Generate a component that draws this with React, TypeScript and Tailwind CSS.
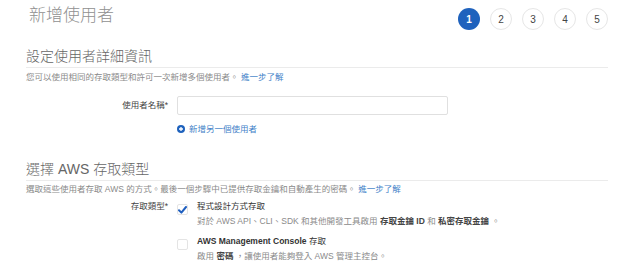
const font = { fontFamily: '"Liberation Sans", "Noto Sans CJK TC", sans-serif' };

function Steps({ current }: { current: number }) {
  return (
    <div className="flex gap-[10px]">
      {[1, 2, 3, 4, 5].map((n) =>
        n === current ? (
          <div key={n} className="w-[22px] h-[22px] rounded-full bg-[#1f62bd] text-white text-[10px] font-bold flex items-center justify-center">
            {n}
          </div>
        ) : (
          <div key={n} className="w-[22px] h-[22px] rounded-full border border-[#e6e6e6] text-[#444] text-[10px] flex items-center justify-center">
            {n}
          </div>
        )
      )}
    </div>
  );
}

function Checkbox({ checked }: { checked?: boolean }) {
  return (
    <div className="w-[11px] h-[11px] mt-[4px] shrink-0 rounded-[2px] border border-[#e4e4e4] bg-white flex items-center justify-center">
      {checked && (
        <svg width="9" height="8" viewBox="0 0 9 8">
          <path d="M1 4.3 L3.4 6.6 L8 1" fill="none" stroke="#1f5fbf" strokeWidth="2" strokeLinecap="round" strokeLinejoin="round" />
        </svg>
      )}
    </div>
  );
}

export default function App() {
  return (
    <div className="w-[637px] h-[268px] bg-white pt-[8px] pl-[26px] pr-[29px] overflow-hidden" style={font}>
      {/* header */}
      <div className="flex justify-between items-start h-[22px]">
        <h1 className="text-[17px] leading-[18px] font-light text-[#909090] pl-[3px] -mt-[1px]">新增使用者</h1>
        <Steps current={1} />
      </div>

      {/* user details */}
      <h2 className="mt-[18px] pb-[3px] text-[14px] leading-[16px] font-light text-[#666] border-b border-[#ebebeb]">設定使用者詳細資訊</h2>
      <p className="mt-[3px] text-[8.5px] leading-[12px] text-[#8a8a8a]">
        您可以使用相同的存取類型和許可一次新增多個使用者。 <span className="text-[#3f7fc8]">進一步了解</span>
      </p>

      <div className="flex items-center mt-[13px]">
        <label className="w-[142px] text-right text-[8.5px] text-[#444]">使用者名稱*</label>
        <input className="ml-[9px] w-[271px] h-[19px] border border-[#e0e0e0] rounded-[2px] outline-none" />
      </div>
      <div className="flex items-center gap-[4px] ml-[151px] mt-[8px] h-[12px]">
        <svg width="8" height="8" viewBox="0 0 8 8">
          <circle cx="4" cy="4" r="4" fill="#1f62bd" />
          <path d="M4 2 V6 M2 4 H6" stroke="white" strokeWidth="1.3" />
        </svg>
        <span className="text-[8.5px] leading-[12px] text-[#3f7fc8]">新增另一個使用者</span>
      </div>

      {/* access type */}
      <h2 className="mt-[26px] pb-[3px] text-[14px] leading-[16px] font-light text-[#666] border-b border-[#ebebeb]">選擇 AWS 存取類型</h2>
      <p className="mt-[2px] text-[8.5px] leading-[12px] text-[#8a8a8a]">
        選取這些使用者存取 AWS 的方式。最後一個步驟中已提供存取金鑰和自動產生的密碼。 <span className="text-[#3f7fc8]">進一步了解</span>
      </p>

      <div className="flex mt-[5px]">
        <label className="w-[142px] text-right text-[8.5px] leading-[12px] text-[#444]">存取類型*</label>
        <div className="ml-[9px] flex flex-col gap-[8px]">
          <div className="flex gap-[9px]">
            <Checkbox checked />
            <div>
              <div className="text-[8.5px] leading-[12px] text-[#333]">程式設計方式存取</div>
              <div className="mt-[3px] text-[8.5px] leading-[12px] text-[#8a8a8a]">
                對於 AWS API、CLI、SDK 和其他開發工具啟用 <b className="text-[#444]">存取金鑰 ID</b> 和 <b className="text-[#444]">私密存取金鑰</b> 。
              </div>
            </div>
          </div>
          <div className="flex gap-[9px]">
            <Checkbox />
            <div>
              <div className="text-[8.5px] leading-[12px] text-[#333] font-bold">AWS Management Console <span className="font-normal">存取</span></div>
              <div className="mt-[3px] text-[8.5px] leading-[12px] text-[#8a8a8a]">
                啟用 <b className="text-[#444]">密碼</b> ，讓使用者能夠登入 AWS 管理主控台。
              </div>
            </div>
          </div>
        </div>
      </div>
    </div>
  );
}
